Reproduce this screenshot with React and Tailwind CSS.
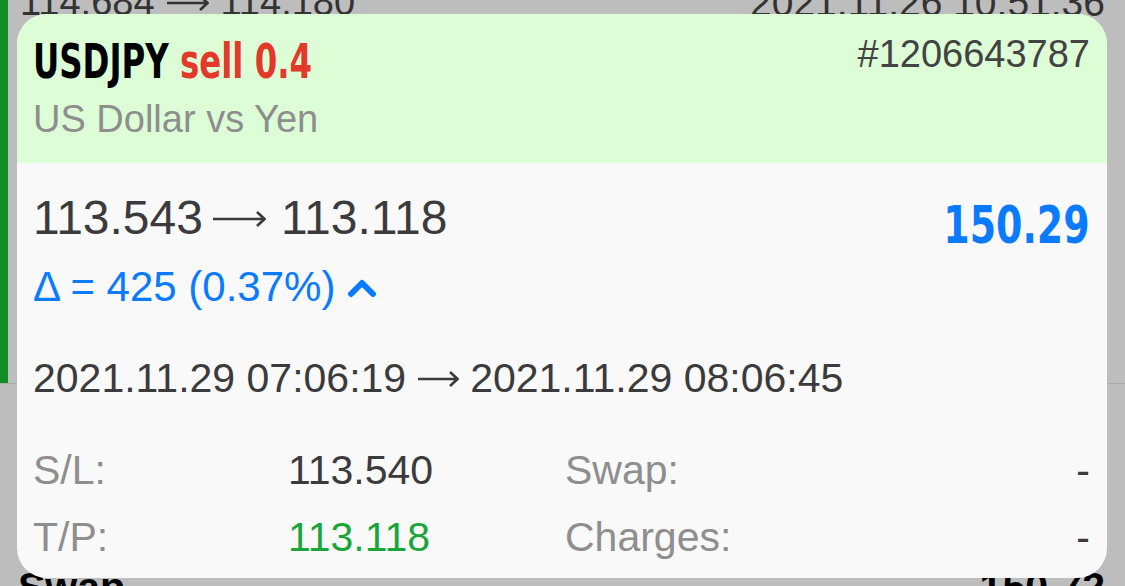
function Arrow({ w, h, cls }) {
  const y = h / 2;
  return (
    <svg className={cls} width={w} height={h} viewBox={`0 0 ${w} ${h}`}>
      <line x1="0" y1={y} x2={w - 1.5} y2={y} stroke="currentColor" strokeWidth="2.6" />
      <polyline points={`${w - 9},${y - 7} ${w - 1.5},${y} ${w - 9},${y + 7}`} fill="none" stroke="currentColor" strokeWidth="2.6" strokeLinejoin="miter" />
    </svg>
  );
}

export default function App() {
  const sans = { fontFamily: '"Liberation Sans", Arial, sans-serif' };
  const cond = { fontFamily: '"DejaVu Sans Condensed", "Liberation Sans", sans-serif' };
  return (
    <div className="relative w-[1125px] h-[586px] overflow-hidden bg-[#bdbdbd]" style={sans}>
      {/* background list behind the popup */}
      <div className="flex flex-col">
        <div className="h-[383px] border-l-[8px] border-[#148c27] flex justify-between pl-[12px] pr-[20px]">
          <div className="mt-[-17px] text-[38px] leading-none text-[#333] whitespace-nowrap">
            114.684<Arrow w={42} h={16} cls="inline-block align-middle mx-[12px] -translate-y-[2px]" />114.180
          </div>
          <div className="mt-[-17px] text-[39px] leading-none text-[#333]">2021.11.26 10:51:36</div>
        </div>
        <div className="h-px bg-[#a9a9a9]"></div>
        <div className="flex justify-between pl-[18px] pr-[20px] mt-[183px]">
          <div className="text-[41px] leading-none font-bold text-black">Swap</div>
          <div className="text-[41px] leading-none font-bold text-black">150.72</div>
        </div>
      </div>

      {/* popup card */}
      <div className="absolute left-[17px] top-[14px] w-[1090px] h-[564px] rounded-[30px] overflow-hidden bg-[#f9f9f9] flex flex-col">
        <div className="h-[149px] bg-[#ddfdd7] flex justify-between pl-[16px] pr-[17px]">
          <div className="flex flex-col">
            <div className="mt-[23px] h-[48px] leading-[48px] text-[48px] font-bold whitespace-nowrap" style={cond}>
              <span className="inline-block origin-left scale-x-[0.75]">
                <span className="text-black">USDJPY</span>{' '}
                <span className="text-[#e3392b]">sell 0.4</span>
              </span>
            </div>
            <div className="mt-[11px] text-[38px] leading-[46px] text-[#8e8e8e] whitespace-nowrap">US Dollar vs Yen</div>
          </div>
          <div className="mt-[17px] text-[38px] leading-[46px] text-[#434343]">#1206643787</div>
        </div>

        <div className="flex flex-col pl-[16px] pr-[17px]">
          <div className="flex justify-between items-start">
            <div className="mt-[27px] text-[48px] leading-[56px] text-[#3b3b3d] whitespace-nowrap">
              113.543<Arrow w={53} h={18} cls="inline-block align-middle ml-[10px] mr-[15px] -translate-y-[2px]" />113.118
            </div>
            <div className="mt-[34px] text-[52px] leading-[56px] font-bold text-[#0a7bff]" style={cond}>
              <span className="inline-block origin-right scale-x-[0.81]">150.29</span>
            </div>
          </div>
          <div className="mt-[10px] flex items-center text-[42px] leading-[48px] text-[#0a7bff] whitespace-nowrap">
            <span>Δ = 425 (0.37%)</span>
            <svg className="ml-[12px] mt-[2px]" width="30" height="20" viewBox="0 0 30 20">
              <polyline points="4,16 15,5 26,16" fill="none" stroke="#0a7bff" strokeWidth="6" strokeLinecap="round" strokeLinejoin="round" />
            </svg>
          </div>
          <div className="mt-[43px] text-[41px] leading-[48px] text-[#3b3b3d] whitespace-nowrap">
            2021.11.29 07:06:19<Arrow w={41} h={16} cls="inline-block align-middle ml-[12px] mr-[11px] -translate-y-[2px]" />2021.11.29 08:06:45
          </div>

          <div className="mt-[44px] grid grid-cols-[255px_277px_1fr] gap-y-[19px] text-[41px] leading-[48px]">
            <div className="text-[#8e8e8e]">S/L:</div>
            <div className="text-[#3b3b3d]">113.540</div>
            <div className="flex justify-between">
              <span className="text-[#8e8e8e]">Swap:</span>
              <span className="text-[#3b3b3d]">-</span>
            </div>
            <div className="text-[#8e8e8e]">T/P:</div>
            <div className="text-[#1aa53a]">113.118</div>
            <div className="flex justify-between">
              <span className="text-[#8e8e8e]">Charges:</span>
              <span className="text-[#3b3b3d]">-</span>
            </div>
          </div>
        </div>
      </div>
    </div>
  );
}
